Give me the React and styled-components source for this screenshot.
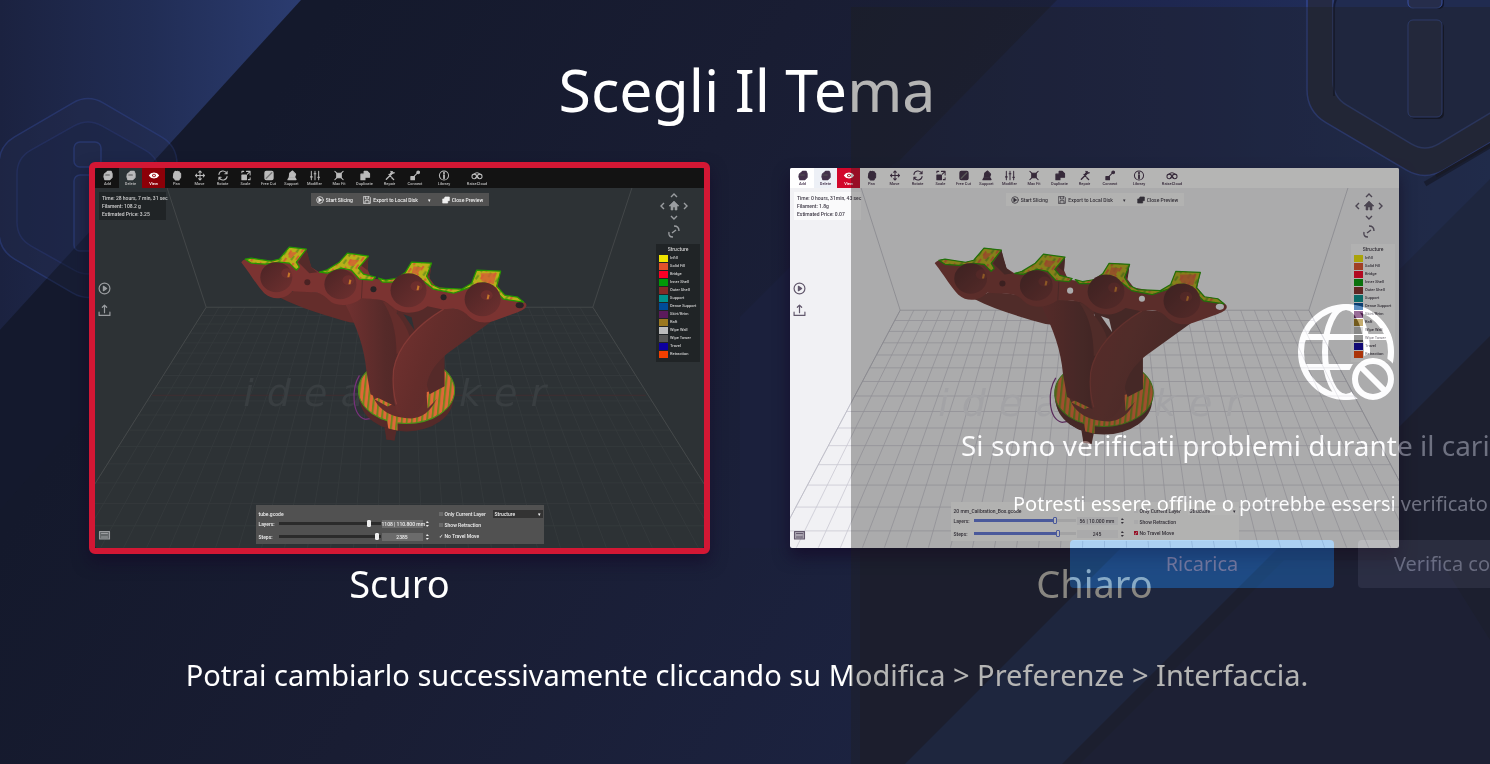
import React from "react";
import styled, { createGlobalStyle, css } from "styled-components";

const GlobalStyle = createGlobalStyle`
  *, *::before, *::after { box-sizing: border-box; }
  html, body { margin: 0; background: #161b2f; }
  h1, h2, p { margin: 0; font-weight: 400; }
`;

const uiFont = `"Noto Sans", "Open Sans", sans-serif`;

/* ---------- page ---------- */

const Page = styled.div`
  position: relative;
  min-height: 100vh;
  overflow: hidden;
  color: #fff;
  font-family: ${uiFont};
`;

const Backdrop = styled.svg`
  position: absolute;
  inset: 0;
  width: 100%;
  height: 100%;
  display: block;
`;

const Content = styled.main`
  position: relative;
  display: flex;
  flex-direction: column;
  padding: 49px 85px 40px 89px;
`;

const Title = styled.h1`
  font-size: 59px;
  line-height: 80px;
  text-align: center;
`;

const Choices = styled.div`
  display: grid;
  grid-template-columns: 1fr 1fr;
  gap: 74px;
  margin-top: 33px;
`;

const Choice = styled.label`
  display: flex;
  flex-direction: column;
  cursor: pointer;
`;

const HiddenRadio = styled.input`
  position: absolute;
  opacity: 0;
  pointer-events: none;
`;

const Frame = styled.div`
  border: 6px solid transparent;
  border-radius: 6px;
  ${HiddenRadio}:checked + & {
    border-color: #d31734;
    box-shadow: 0 8px 16px rgba(20, 8, 40, 0.6);
  }
`;

const Caption = styled.span`
  margin-top: 5px;
  font-size: 38px;
  line-height: 48px;
  text-align: center;
  color: #bdbab4;
  ${HiddenRadio}:checked ~ & {
    color: #fff;
  }
`;

const Note = styled.p`
  margin-top: 48px;
  font-size: 29px;
  line-height: 40px;
  text-align: center;
`;

/* ---------- preview window ---------- */

const dark = {
  bg: "#2d3235", bar: "#131313", barText: "#bbb", hover: "#2c3335", active: "#8c0008",
  box: "#202426", boxText: "#d0d0d0", panel: "#515151", panelText: "#f0f0f0", icon: "#9a9da0",
  line: "#484c4e", grid: "#363b3d", mark: "#393e41", track: "#2b2b2b", fill: "#2b2b2b",
  field: "#6b6b6b", select: "#333", thumb: "#eee", check: "transparent", tick: "#fff",
  m: ["#7b3331", "#552a29", "#642d2b"],
};
const light = {
  bg: "#f1f1f4", bar: "#ffffff", barText: "#43304a", hover: "#edf0f6", active: "#d2072b",
  box: "#fafafb", boxText: "#3c3744", panel: "#fbfbfb", panelText: "#3c3744", icon: "#62586c",
  line: "#bcbbc6", grid: "#c9c8d2", mark: "#e5e5ea", track: "#e5e5e8", fill: "#6076da",
  field: "#efeff2", select: "#fff", thumb: "#fff", check: "#d2072b", tick: "#fff",
  m: ["#7a3532", "#582d2c", "#693330"],
};

const Window = styled.div`
  position: relative;
  overflow: hidden;
  aspect-ratio: 608 / 379;
  background: ${(p) => p.$t.bg};
  border-radius: 2px;
  font-family: Roboto, "Liberation Sans", sans-serif;
  font-weight: 500;
  font-size: 5px;
  line-height: 8px;
  ${(p) => p.$raised && css`box-shadow: 0 8px 16px rgba(20, 8, 40, 0.7);`}
`;

const Scene = styled.svg`
  position: absolute;
  inset: 0;
  width: 100%;
  height: 100%;
`;

const ToolBar = styled.div`
  position: relative;
  display: flex;
  height: 20px;
  padding-left: 1px;
  background: ${(p) => p.$t.bar};
  color: ${(p) => p.$t.barText};
`;

const Tool = styled.span`
  display: flex;
  flex-direction: column;
  align-items: center;
  justify-content: center;
  width: ${(p) => p.$w}px;
  font-size: 4px;
  line-height: 6px;
  white-space: nowrap;
  background: ${(p) => p.$bg || "transparent"};
  color: ${(p) => p.$fg || "inherit"};
  svg { width: 12px; height: 11px; }
`;

const Stats = styled.div`
  position: absolute;
  left: 4px;
  top: 24px;
  width: 67px;
  padding: 2px 3px;
  background: ${(p) => p.$t.box};
  color: ${(p) => p.$t.boxText};
  white-space: nowrap;
`;

const Actions = styled.div`
  position: absolute;
  top: 25px;
  left: 50%;
  transform: translateX(-50%);
  display: flex;
  justify-content: space-around;
  align-items: center;
  width: 178px;
  height: 13px;
  background: ${(p) => p.$t.panel};
  color: ${(p) => p.$t.panelText};
`;

const Action = styled.span`
  display: flex;
  align-items: center;
  gap: 2px;
  white-space: nowrap;
  svg { width: 8px; height: 8px; }
`;

const SideIcons = styled.div`
  position: absolute;
  left: 3px;
  top: 114px;
  display: flex;
  flex-direction: column;
  gap: 9px;
  color: ${(p) => p.$t.icon};
  svg { width: 13px; height: 13px; }
`;

const Keyboard = styled.div`
  position: absolute;
  left: 3px;
  bottom: 7px;
  color: ${(p) => p.$t.icon};
  svg { display: block; width: 13px; height: 12px; }
`;

const RightRail = styled.div`
  position: absolute;
  right: 4px;
  top: 24px;
  width: 44px;
  display: flex;
  flex-direction: column;
  align-items: center;
  color: ${(p) => p.$t.icon};
`;

const Orbit = styled.svg`
  width: 30px;
  height: 49px;
  margin-right: 8px;
`;

const Legend = styled.div`
  width: 100%;
  margin-top: 3px;
  padding: 1px 3px 4px;
  background: ${(p) => p.$t.box};
  color: ${(p) => p.$t.boxText};
`;

const LegendTitle = styled.div`
  text-align: center;
  line-height: 9px;
`;

const LegendRow = styled.div`
  display: flex;
  align-items: center;
  gap: 2px;
  height: 8px;
  font-size: 4px;
  white-space: nowrap;
  &::before {
    content: "";
    width: 9px;
    height: 7px;
    background: ${(p) => p.$c};
  }
`;

const Panel = styled.div`
  position: absolute;
  left: 50%;
  transform: translateX(-50%);
  bottom: ${(p) => (p.$raised ? 7 : 4)}px;
  width: 288px;
  height: 39px;
  display: grid;
  grid-template-columns: 172px 1fr;
  gap: 8px;
  padding: 5px 3px 1px;
  background: ${(p) => p.$t.panel};
  color: ${(p) => p.$t.panelText};
  white-space: nowrap;
`;

const Meter = styled.div`
  display: flex;
  align-items: center;
  height: 12px;
  margin-bottom: 1px;
`;

const MeterName = styled.span`
  width: 20px;
`;

const Track = styled.span`
  position: relative;
  width: 102px;
  height: 3px;
  background: linear-gradient(90deg, ${(p) => p.$t.fill} ${(p) => p.$v}%, ${(p) => p.$t.track} ${(p) => p.$v}%);
  &::after {
    content: "";
    position: absolute;
    top: -2px;
    left: ${(p) => p.$v}%;
    width: 4px;
    height: 7px;
    margin-left: -2px;
    background: ${(p) => p.$t.thumb};
    border: 1px solid ${(p) => (p.$t.fill === "#6076da" ? p.$t.fill : p.$t.thumb)};
    border-radius: 1px;
  }
`;

const Value = styled.span`
  width: 41px;
  height: 8px;
  margin-left: 1px;
  background: ${(p) => p.$t.field};
  text-align: center;
`;

const Stepper = styled.svg`
  width: 5px;
  height: 8px;
  margin-left: 2px;
`;

const Options = styled.div`
  display: grid;
  grid-template-columns: 54px 50px;
  align-content: start;
  row-gap: 3px;
`;

const Check = styled.span`
  display: flex;
  align-items: center;
  gap: 2px;
  &::before {
    content: "${(p) => (p.$on ? "✓" : "")}";
    width: 4px;
    height: 4px;
    line-height: 4px;
    background: ${(p) => (p.$on ? p.$t.check : p.$t.field)};
    color: ${(p) => p.$t.tick};
  }
`;

const Picker = styled.span`
  display: flex;
  justify-content: space-between;
  align-items: center;
  padding: 0 2px;
  background: ${(p) => p.$t.select};
`;

/* ---------- offline dialog ---------- */

const Veil = styled.section`
  position: absolute;
  top: 7px;
  bottom: 0;
  left: calc(50% + 106px);
  width: 990px;
  display: flex;
  flex-direction: column;
  align-items: center;
  padding-top: 297px;
  background: rgba(30, 29, 27, 0.33);
  white-space: nowrap;
`;

const Glow = css`
  mix-blend-mode: plus-lighter;
  color: #525252;
`;

const Globe = styled.svg`
  ${Glow}
  width: 96px;
  height: 96px;
  flex: none;
`;

const VeilTitle = styled.h2`
  ${Glow}
  width: 770px;
  margin-top: 23px;
  font-size: 28px;
  line-height: 44px;
`;

const VeilText = styled.p`
  ${Glow}
  width: 666px;
  margin-top: 21px;
  font-size: 20px;
  line-height: 32px;
`;

const VeilActions = styled.div`
  display: flex;
  gap: 24px;
  margin-top: 20px;
`;

const VeilButton = styled.button`
  ${Glow}
  width: 264px;
  height: 48px;
  padding: 0;
  border: 0;
  border-radius: 4px;
  font: 20px/28px ${uiFont};
  color: ${(p) => (p.$primary ? "#505060" : "#4c4c50")};
  background: ${(p) => (p.$primary ? "#002546" : "#0e0e10")};
`;

/* ---------- drawings ---------- */

const hex = (cx, cy, w, h, r) => {
  const pts = [[cx, cy - h], [cx + w, cy - h / 2], [cx + w, cy + h / 2], [cx, cy + h], [cx - w, cy + h / 2], [cx - w, cy - h / 2]];
  return pts.map((p, i) => {
    const a = pts[(i + 5) % 6];
    const b = pts[(i + 1) % 6];
    const toward = (q) => {
      const d = Math.hypot(q[0] - p[0], q[1] - p[1]);
      return [p[0] + ((q[0] - p[0]) * r) / d, p[1] + ((q[1] - p[1]) * r) / d];
    };
    const s = toward(a);
    const e = toward(b);
    return `${i ? "L" : "M"}${s} Q${p} ${e}`;
  }).join(" ") + "Z";
};

function BackdropArt() {
  return (
    <Backdrop viewBox="0 0 1490 764" preserveAspectRatio="xMidYMid slice" aria-hidden="true">
      <defs>
        <linearGradient id="tl" x1="0" x2="300" y1="0" y2="0" gradientUnits="userSpaceOnUse">
          <stop offset="0" stopColor="#1b2240" /><stop offset="0.5" stopColor="#212d55" /><stop offset="1" stopColor="#2b3c70" />
        </linearGradient>
        <linearGradient id="base" x1="150" y1="300" x2="900" y2="764" gradientUnits="userSpaceOnUse">
          <stop offset="0" stopColor="#14192c" /><stop offset="0.45" stopColor="#191d33" /><stop offset="1" stopColor="#1c2341" />
        </linearGradient>
        <linearGradient id="tr" x1="850" x2="1490" y1="0" y2="0" gradientUnits="userSpaceOnUse">
          <stop offset="0" stopColor="#1b2140" /><stop offset="0.5" stopColor="#1e2750" /><stop offset="1" stopColor="#223261" />
        </linearGradient>
      </defs>
      <rect width="1490" height="764" fill="url(#base)" />
      <path d="M0 0H301L0 330Z" fill="url(#tl)" />
      <path d="M1057 0H1490V560H900V160Z" fill="url(#tr)" />
      <path d="M893 164L740 317V548H900V160Z" fill="#1b203c" />
      <path d="M860 540H1130L906 764H860Z" fill="#1b1f36" />
      <path d="M1490 179V340L1066 764H905Z" fill="#1f2a50" />
      <path d="M1490 336V764H1062Z" fill="#1c2039" />
      <path d="M1284 560L1440 560 1490 640V764H1080Z" fill="#1e2546" opacity="0.6" />
      <g fill="#222b4c" fillOpacity="0.55" stroke="#2c3d7c" strokeWidth="1.5">
        <path d={hex(88, 198, 89, 104, 18)} fillOpacity="0.4" strokeOpacity="0.65" />
        <path d={hex(88, 198, 71, 80, 16)} fill="#1c2445" strokeOpacity="0.4" />
        <rect x="74" y="142" width="27" height="25" rx="6" strokeOpacity="0.7" />
        <rect x="74" y="175" width="27" height="76" rx="6" strokeOpacity="0.7" />
      </g>
      <path d="M0 330L178 135V310L0 510Z" fill="#151a2e" opacity="0.45" />
      <g>
        <path d="M1425 184L1500 140" stroke="#0f1225" strokeWidth="5" opacity="0.6" />
        <path d={hex(1425, 42, 118, 139, 22)} fill="#252a44" stroke="#31448e" strokeWidth="1.5" />
        <path d="M1436 176L1500 139" stroke="#15182c" strokeWidth="3" />
        <path d={hex(1425, 42, 92, 110, 16)} fill="#202b50" stroke="#30417c" strokeWidth="1.5" />
        <path d="M1334 96V8Q1334 0 1340 -6" fill="none" stroke="#10142a" strokeWidth="2" opacity="0.7" />
        <rect x="1410" y="-20" width="34" height="29" rx="5" fill="#11152a" />
        <rect x="1410" y="22" width="34" height="97" rx="5" fill="#11152a" />
        <rect x="1408" y="-20" width="34" height="28" rx="5" fill="#262d4b" stroke="#3850a2" />
        <rect x="1408" y="20" width="34" height="97" rx="5" fill="#262d4b" stroke="#34488e" />
      </g>
    </Backdrop>
  );
}

function Floor({ t, cx, half, top, slope, step }) {
  const bottom = 379;
  const apex = top - half / slope;
  const rows = [];
  for (let i = 1; i < 26; i++) {
    const y = apex + (top - apex) / (1 - step * i);
    if (y > bottom || y < top) break;
    rows.push(y);
  }
  const w = (y) => (y - apex) * slope;
  const cols = Array.from({ length: 31 }, (_, i) => (i - 15) / 15);
  return (
    <g fill="none" stroke={t.grid} strokeWidth="0.8">
      {rows.map((y) => <path key={y} d={`M${cx - w(y)} ${y}H${cx + w(y)}`} />)}
      {cols.map((c) => <path key={c} d={`M${cx + half * c} ${top}L${cx + w(bottom) * c} ${bottom}`} />)}
      <g stroke={t.line}>
        <path d={`M${cx - half - 39} 20L${cx - half} ${top}H${cx + half}L${cx + half + 39} 20`} />
        <path d={`M${cx - half} ${top}L${cx - w(bottom)} ${bottom}M${cx + half} ${top}L${cx + w(bottom)} ${bottom}`} />
      </g>
    </g>
  );
}

function Bore({ x, y, r, t, spot }) {
  return (
    <g>
      <ellipse cx={x} cy={y} rx={r} ry={r - 1} fill={`url(#bore-${t})`} />
      <ellipse cx={x + spot} cy={y - 4} rx="6" ry="5" fill="#7b3230" opacity="0.5" />
      <path d={`M${x + spot + 1} ${y - 5}l2 1-1 4-2 0z`} fill="#c4752a" />
    </g>
  );
}

function Manifold({ t, id }) {
  const [face, deep, mid] = t.m;
  return (
    <g>
      <defs>
        <linearGradient id={`bore-${id}`} x1="0" x2="1" y1="0" y2="1">
          <stop offset="0" stopColor="#4b2425" /><stop offset="1" stopColor="#6f302f" />
        </linearGradient>
        <linearGradient id={`pipe-${id}`} x1="0" x2="1" y1="0" y2="0">
          <stop offset="0" stopColor="#713130" /><stop offset="0.6" stopColor={deep} /><stop offset="1" stopColor="#4f2626" />
        </linearGradient>
        <linearGradient id={`bend-${id}`} x1="0" x2="1" y1="0" y2="0.4">
          <stop offset="0" stopColor="#743230" /><stop offset="0.45" stopColor={mid} /><stop offset="1" stopColor={deep} />
        </linearGradient>
        <pattern id={`infill-${id}`} width="5" height="9" patternUnits="userSpaceOnUse" patternTransform="rotate(6)">
          <rect width="5" height="9" fill="#df6838" /><rect width="2" height="9" fill="#71861b" />
        </pattern>
        <pattern id={`top-${id}`} width="9" height="9" patternUnits="userSpaceOnUse" patternTransform="rotate(35)">
          <rect width="9" height="9" fill="#b9b01a" /><rect width="2" height="5" fill="#d2642f" /><rect x="5" y="3" width="2" height="5" fill="#71951a" />
        </pattern>
      </defs>
      <path d="M264 207C256 220 256 247 270 251M270 251L282 249" fill="none" stroke="#78317c" strokeWidth="1.2" />
      <path d="M263 222C264 245 282 260 299 261V272L291 271 290 258C274 250 262 240 263 222Z" fill={deep} />
      <ellipse cx="311" cy="229" rx="47" ry="34" fill={deep} />
      <ellipse cx="311" cy="222" rx="48" ry="33" fill={`url(#infill-${id})`} stroke="#4b9118" strokeWidth="1" />
      <path d="M291 249H302V262L293 261Z" fill={`url(#infill-${id})`} />
      <path d="M289 259L301 262 299 272 291 271Z" fill={deep} />
      <path d="M277 226C282 243 298 250 316 250 331 249 339 238 345 221V205H274Z" fill={mid} />
      <path d="M279 231L292 238 301 234 292 225Z" fill={`url(#infill-${id})`} />
      <path d="M331 224L345 219 350 222 332 240Z" fill={`url(#infill-${id})`} />
      <path d="M184 129C205 140 230 147 254 154L290 158 310 134 200 122Z" fill={mid} />
      <path d="M300 134L310 200 330 200 356 150 350 134Z" fill={deep} />
      <path d="M349 156V218L334 226 322 186Z" fill={deep} />
      <path d="M250 136C262 160 269 180 271 203L275 226 300 238 318 200C317 170 306 146 288 132L252 130Z" fill={`url(#pipe-${id})`} />
      <path d="M287 133C296 146 301 162 301 186L316 176C313 158 303 146 291 134Z" fill={mid} />
      <path d="M308 146L316 149 319 162Z" fill={t.bg} />
      <path d="M348 140C323 155 302 176 298 200 296 222 298 240 305 248 317 251 326 244 331 226 330 208 339 196 352 185L396 153 378 142Z" fill={`url(#bend-${id})`} />
      <path d="M348 141C323 156 302 177 298 202 297 214 298 226 301 236" fill="none" stroke="#833a36" strokeWidth="1.2" />
      <path d="M146 94C148 91 152 90 156 90L176 93 184 91 194 79 211 81 213 90 216 99 224 104 231 102 244 94 252 85 273 88 272 101 276 110 290 112 302 110 310 104 316 94 336 95 334 110 340 118 357 121 368 121 376 115 381 102 405 103 402 118 409 127 422 129 430 135C432 138 430 141 422 144L400 152C388 157 377 153 371 146 362 138 354 141 346 141L332 138C322 146 309 146 300 141 291 134 290 132 281 131L266 130C258 137 245 139 236 134 228 127 226 124 216 124L197 123C190 131 178 133 169 125 162 118 156 107 146 94Z" fill={face} />
      <path d="M211 81L216 99 222 104 214 105 203 94Z M273 88L272 102 264 96Z M336 95L334 108 328 103Z" fill={deep} />
      <g fill={`url(#top-${id})`} stroke="#239800" strokeWidth="1.2" strokeLinejoin="round">
        <path d="M150 91L156 90 176 93 184 91 194 79 211 81 201 94 204 99 201 102 194 95 184 94 170 96 156 95Z" />
        <path d="M224 104L231 102 244 94 252 85 273 88 263 100 268 106 280 109 277 112 264 111 256 102 246 100 232 105Z" />
        <path d="M283 110L290 112 302 110 310 104 316 94 336 95 331 108 336 116 344 120 366 121 376 115 381 102 405 103 401 118 409 127 422 129 428 134 408 131 398 121 386 116 372 120 358 125 338 121 328 113 314 109 300 114 287 114Z" />
      </g>
      <g fill="#d45f35" opacity="0.8"><path d="M385 105H401L398 116 386 113Z" /><path d="M318 98l8 1-4 7-6-1zM254 91l10 1-6 6-5-1zM194 84l8 0-6 6-3-1z" /></g>
      <Bore x={181} y={109} r={16} t={id} spot={11} />
      <Bore x={245} y={116} r={16} t={id} spot={8} />
      <Bore x={313} y={122} r={18} t={id} spot={8} />
      <Bore x={387} y={131} r={18} t={id} spot={4} />
      <g fill={id === "light" ? "#f1f1f4" : "#292325"}>
        <circle cx="212" cy="114" r="3" fill="#4a2223" /><circle cx="278" cy="121" r="3" />
        <circle cx="348" cy="129" r="3" /><ellipse cx="424" cy="137" rx="4" ry="3" />
      </g>
      <path d="M267 112L266 130" stroke={deep} strokeWidth="0.8" />
    </g>
  );
}

const Glyph = ({ children }) => (
  <svg viewBox="0 0 24 24" fill="none" stroke="currentColor" strokeWidth="2.2" strokeLinecap="round" strokeLinejoin="round" aria-hidden="true">{children}</svg>
);

const blob = <path d="M4 9L11 3H19L21 8V16L16 21H5L3 15ZM8 10C10 8 15 8 16 11" fill="currentColor" />;
const icons = {
  Add: <>{blob}<path d="M7 11H15" stroke="#555" /></>,
  Delete: <>{blob}<path d="M7 11H15" stroke="#555" /></>,
  View: <><path d="M2 12C6 5 18 5 22 12 18 19 6 19 2 12Z" fill="currentColor" /><circle cx="12" cy="12" r="4" fill="#98000c" stroke="none" /><circle cx="12" cy="12" r="1" /></>,
  Pan: <path d="M5 8Q5 6 7 6V4Q9 2 11 4 13 1 15 4 18 3 18 6L20 8V16L16 22H9L4 16Z" fill="currentColor" />,
  Move: <path d="M12 2V22M2 12H22M9 5L12 2 15 5M9 19L12 22 15 19M5 9L2 12 5 15M19 9L22 12 19 15" />,
  Rotate: <path d="M3 10A9 9 0 0 1 20 7M21 3V8H16M21 14A9 9 0 0 1 4 17M3 21V16H8" />,
  Scale: <><path d="M3 11H13V21H3Z" fill="currentColor" /><path d="M3 6V3H7M13 3H21V11M21 17V21H17M15 9L20 4" /></>,
  "Free Cut": <><rect x="3" y="3" width="18" height="18" rx="3" fill="currentColor" /><path d="M6 18L18 6" stroke="#777" strokeWidth="3" /></>,
  Support: <path d="M7 7L13 2 20 9 18 15H6ZM3 21L6 16H18L21 21Z" fill="currentColor" />,
  Modifier: <path d="M4 3V21M12 3V21M20 3V21M2 15H6M10 8H14M18 16H22" />,
  "Max Fit": <><rect x="7" y="7" width="10" height="10" fill="currentColor" /><path d="M3 3L7 7M21 3L17 7M3 21L7 17M21 21L17 17" /></>,
  Duplicate: <path d="M10 3H17L22 8V16H10ZM3 9H12V21H3Z" fill="currentColor" />,
  Repair: <path d="M4 20L17 7M14 3L18 7 21 6M10 10L14 14M16 17L20 21M17 4L13 8" strokeWidth="3" />,
  Connect: <><path d="M3 14H11V21H3Z" fill="currentColor" /><path d="M10 14L17 7" /><circle cx="19" cy="5" r="3" fill="currentColor" /></>,
  Library: <><circle cx="12" cy="12" r="10" /><path d="M12 6V7M12 11V18" strokeWidth="4" /></>,
  RaiseCloud: <><circle cx="6" cy="14" r="5" /><circle cx="18" cy="14" r="5" /><path d="M6 9A7 6 0 0 1 18 9M12 13L9 17M12 13L15 17" /></>,
};

const tools = [
  ["Add", 23], ["Delete", 23], ["View", 23], ["Pan", 23], ["Move", 23], ["Rotate", 23], ["Scale", 23], ["Free Cut", 23],
  ["Support", 23], ["Modifier", 23], ["Max Fit", 26], ["Duplicate", 25], ["Repair", 25], ["Connect", 26], ["Library", 32], ["RaiseCloud", 34],
];

const legend = [
  ["Infill", "#efe400"], ["Solid Fill", "#e2502a"], ["Bridge", "#fb0026"], ["Inner Shell", "#009a07"], ["Outer Shell", "#842a28"],
  ["Support", "#00908d"], ["Dense Support", "#004b98"], ["Skirt/Brim", "#5b1a5b"], ["Raft", "#9b781f"], ["Wipe Wall", "#bdbdbd"],
  ["Wipe Tower", "#555"], ["Travel", "#0d00a0"], ["Retraction", "#f13f00"],
];

function Preview({ t, id, raised, stats, file, layers, steps, layerAt, stepAt }) {
  const floor = id === "dark"
    ? { cx: 304, half: 193, top: 139, slope: 0.63, step: 0.026 }
    : { cx: 314, half: 204, top: 142, slope: 0.53, step: 0.026 };
  return (
    <Window $t={t} $raised={raised} aria-hidden="true">
      <Scene viewBox="0 0 608 379" preserveAspectRatio="xMidYMid slice">
        <Floor t={t} {...floor} />
        {id === "dark" && <path d="M57 227H550" stroke="#3f2e30" strokeWidth="1" />}
        <text x="148" y={id === "dark" ? 238 : 248} fill={t.mark} fontFamily="DejaVu Sans, sans-serif" fontWeight="400" fontStyle="italic" fontSize="38" letterSpacing="13">ideaMaker</text>
        <g transform={id === "dark" ? undefined : "translate(-5 0) scale(1.024 1.012)"}><Manifold t={t} id={id} /></g>
      </Scene>
      <ToolBar $t={t}>
        {tools.map(([name, w]) => (
          <Tool key={name} $w={w} $bg={name === "View" ? t.active : name === "Delete" ? t.hover : null} $fg={name === "View" ? "#fff" : null}>
            <Glyph>{icons[name]}</Glyph>{name}
          </Tool>
        ))}
      </ToolBar>
      <Stats $t={t}>{stats.map((s) => <div key={s}>{s}</div>)}</Stats>
      <Actions $t={t}>
        <Action><Glyph><circle cx="12" cy="12" r="10" /><path d="M9 7L17 12 9 17Z" fill="currentColor" /></Glyph>Start Slicing</Action>
        <Action><Glyph><path d="M2 2H19L22 5V22H2ZM7 3V9H16V3M6 21V14H18V21" /></Glyph>Export to Local Disk</Action>
        <Action>▾</Action>
        <Action><Glyph><path d="M3 9H17V21H3ZM7 8L9 3H22V14H18" fill="currentColor" /></Glyph>Close Preview</Action>
      </Actions>
      <SideIcons $t={t}>
        <Glyph><circle cx="12" cy="12" r="10" /><path d="M10 8L16 12 10 16Z" fill="currentColor" /></Glyph>
        <Glyph><path d="M2 15V21H22V15M12 16V2M8 6L12 2 16 6" /></Glyph>
      </SideIcons>
      <Keyboard $t={t}><Glyph><path d="M2 5H22V20H2Z" fillOpacity="0.5" fill="currentColor" /><path d="M6 9H18M6 16H18" /></Glyph></Keyboard>
      <RightRail $t={t}>
        <Orbit viewBox="0 0 30 49" fill="none" stroke="currentColor" strokeWidth="1.4">
          <path d="M12 5L15 2 18 5M12 24L15 27 18 24M5 11L2 14 5 17M25 11L28 14 25 17" />
          <path d="M10 14L15 9 20 14H18V18H16V15H14V18H12V14Z" fill="currentColor" strokeWidth="0.6" />
          <path d="M15 34Q20 34 20 39M10 40Q9 45 14 45M13 41L17 38" />
        </Orbit>
        <Legend $t={t}>
          <LegendTitle>Structure</LegendTitle>
          {legend.map(([n, c]) => <LegendRow key={n} $c={c}>{n}</LegendRow>)}
        </Legend>
      </RightRail>
      <Panel $t={t} $raised={raised}>
        <div>
          <div>{file}</div>
          {[["Layers:", layers, layerAt], ["Steps:", steps, stepAt]].map(([n, v, at]) => (
            <Meter key={n}>
              <MeterName>{n}</MeterName><Track $t={t} $v={at} /><Value $t={t}>{v}</Value>
              <Stepper viewBox="0 0 5 8" fill="currentColor"><path d="M1 3L2 1 4 3ZM1 5L2 7 4 5Z" /></Stepper>
            </Meter>
          ))}
        </div>
        <Options>
          <Check $t={t}>Only Current Layer</Check>
          <Picker $t={t}>Structure<span>▾</span></Picker>
          <Check $t={t}>Show Retraction</Check><span />
          <Check $t={t} $on>No Travel Move</Check>
        </Options>
      </Panel>
    </Window>
  );
}

function OfflineGlobe() {
  return (
    <Globe viewBox="0 0 96 96" fill="none" stroke="currentColor" strokeWidth="6" aria-hidden="true">
      <mask id="notch">
        <rect width="96" height="96" fill="#fff" stroke="none" />
        <circle cx="75" cy="75" r="25" fill="#000" stroke="none" />
      </mask>
      <g mask="url(#notch)">
        <circle cx="48" cy="48" r="45" />
        <ellipse cx="48" cy="48" rx="21" ry="45" />
        <path d="M6 33H90M6 63H60" />
      </g>
      <circle cx="75" cy="75" r="18" />
      <path d="M62 62L88 88" />
    </Globe>
  );
}

export default function App() {
  return (
    <Page>
      <GlobalStyle />
      <BackdropArt />
      <Content>
        <Title>Scegli Il Tema</Title>
        <Choices role="radiogroup" aria-label="Scegli Il Tema">
          <Choice>
            <HiddenRadio type="radio" name="theme" value="dark" defaultChecked />
            <Frame>
              <Preview t={dark} id="dark" file="tube.gcode" layers="1108 | 110.800 mm" steps="2385" layerAt={89} stepAt={97}
                stats={["Time: 28 hours, 7 min, 31 sec", "Filament: 108.2 g", "Estimated Price: 3.25"]} />
            </Frame>
            <Caption>Scuro</Caption>
          </Choice>
          <Choice>
            <HiddenRadio type="radio" name="theme" value="light" />
            <Frame>
              <Preview t={light} id="light" raised file="20 mm_Calibration_Box.gcode" layers="56 | 10.000 mm" steps="245" layerAt={80} stepAt={83}
                stats={["Time: 0 hours, 31min, 43 sec", "Filament: 1.8g", "Estimated Price: 0.07"]} />
            </Frame>
            <Caption>Chiaro</Caption>
          </Choice>
        </Choices>
        <Note>Potrai cambiarlo successivamente cliccando su Modifica &gt; Preferenze &gt; Interfaccia.</Note>
      </Content>
      <Veil>
        <OfflineGlobe />
        <VeilTitle>Si sono verificati problemi durante il caricamento</VeilTitle>
        <VeilText>Potresti essere offline o potrebbe essersi verificato un errore.</VeilText>
        <VeilActions>
          <VeilButton type="button" $primary>Ricarica</VeilButton>
          <VeilButton type="button">Verifica connessione</VeilButton>
        </VeilActions>
      </Veil>
    </Page>
  );
}
